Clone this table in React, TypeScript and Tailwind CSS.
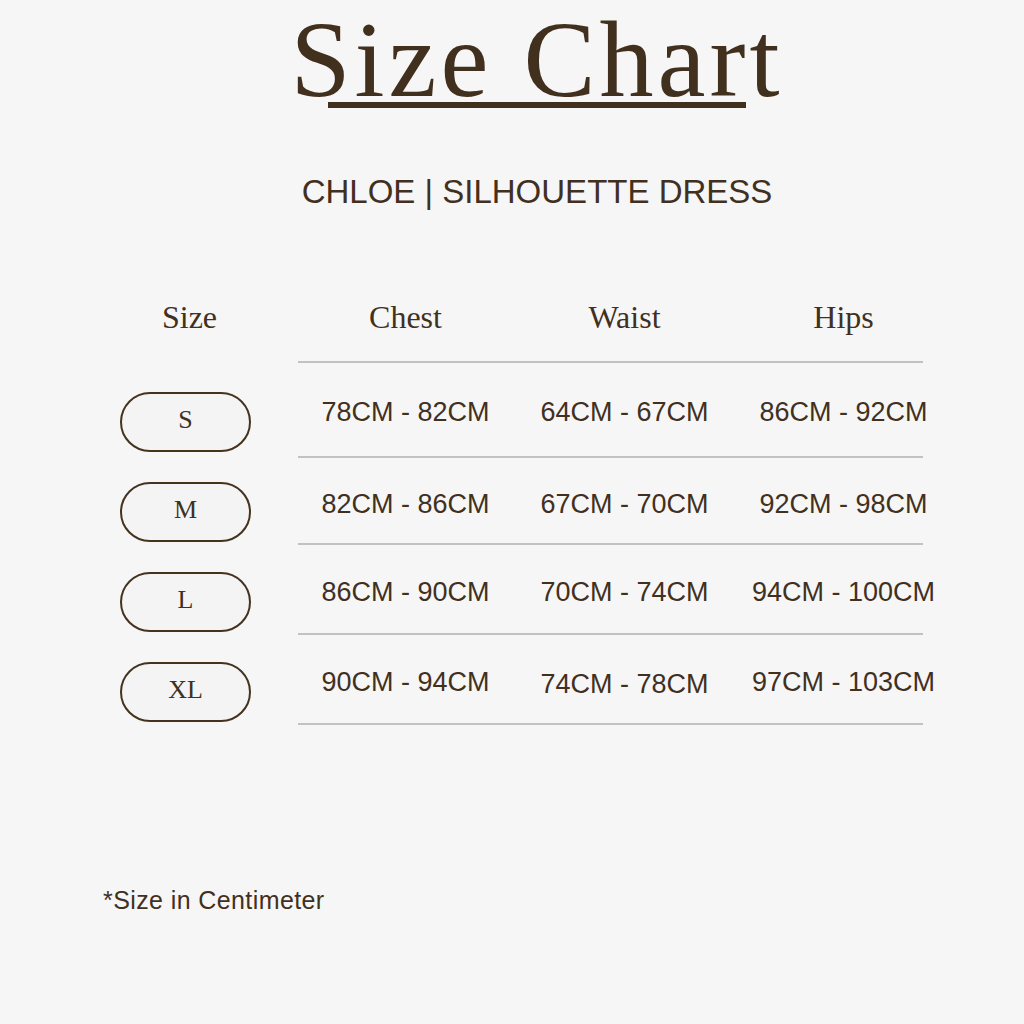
const serif = { fontFamily: '"Liberation Serif", "Times New Roman", serif' }
const sans = { fontFamily: '"Liberation Sans", Arial, sans-serif' }

type Row = {
  size: string
  values: string[]
  height: number
  pillTop: number
  textTop: number
  shift?: number[]
}

const rows: Row[] = [
  { size: 'S', values: ['78CM - 82CM', '64CM - 67CM', '86CM - 92CM'], height: 95, pillTop: 29, textTop: 34 },
  { size: 'M', values: ['82CM - 86CM', '67CM - 70CM', '92CM - 98CM'], height: 87, pillTop: 24, textTop: 31 },
  { size: 'L', values: ['86CM - 90CM', '70CM - 74CM', '94CM - 100CM'], height: 90, pillTop: 27, textTop: 32 },
  { size: 'XL', values: ['90CM - 94CM', '74CM - 78CM', '97CM - 103CM'], height: 90, pillTop: 27, textTop: 32, shift: [0, 2, 0] },
]

const headers = ['Chest', 'Waist', 'Hips']

function SizePill({ label }: { label: string }) {
  return (
    <div
      className="flex h-[60px] w-[131px] items-center justify-center rounded-full border-2 border-[#45321f] bg-[#f4f4f4] pb-[5px] text-[26px] leading-none text-[#42301f]"
      style={serif}
    >
      {label}
    </div>
  )
}

export default function App() {
  return (
    <div className="h-[1024px] w-full overflow-hidden bg-[#f6f6f6] text-[#42301f]">
      {/* heading */}
      <div className="flex flex-col items-center pl-[50px]">
        <h1 className="text-[108px] leading-[120px] tracking-[4px]" style={serif}>
          Size Chart
        </h1>
        <div className="mt-[-18px] h-[6px] w-[418px] bg-[#42301f]" />
        <p className="mt-[68px] text-[33px] leading-[32px]" style={sans}>
          CHLOE | SILHOUETTE DRESS
        </p>
      </div>

      {/* table */}
      <div className="mt-[93px]">
        <div className="flex h-[62px]">
          <div className="w-[298px] shrink-0 pl-[124px]">
            <div className="w-[131px] text-center text-[32px] leading-[32px]" style={serif}>
              Size
            </div>
          </div>
          <div className="flex w-[625px] flex-col">
            <div className="ml-[-2px] grid w-[657px] grid-cols-3">
              {headers.map((h) => (
                <div key={h} className="text-center text-[32px] leading-[32px]" style={serif}>
                  {h}
                </div>
              ))}
            </div>
            <div className="flex-1" />
            <div className="h-[2px] bg-[#c2c2c2]" />
          </div>
        </div>

        {rows.map((r) => (
          <div key={r.size} className="flex" style={{ height: r.height }}>
            <div className="w-[298px] shrink-0 pl-[120px]" style={{ paddingTop: r.pillTop }}>
              <SizePill label={r.size} />
            </div>
            <div className="flex w-[625px] flex-col">
              <div className="ml-[-2px] grid w-[657px] grid-cols-3" style={{ marginTop: r.textTop }}>
                {r.values.map((v, i) => (
                  <div
                    key={i}
                    className="whitespace-nowrap text-center text-[27px] leading-[30px]"
                    style={{ ...sans, marginTop: r.shift ? r.shift[i] : 0 }}
                  >
                    {v}
                  </div>
                ))}
              </div>
              <div className="flex-1" />
              <div className="h-[2px] bg-[#c2c2c2]" />
            </div>
          </div>
        ))}
      </div>

      <p className="ml-[103px] mt-[163px] text-[25px] leading-[24px] tracking-[0.4px]" style={sans}>
        *Size in Centimeter
      </p>
    </div>
  )
}
